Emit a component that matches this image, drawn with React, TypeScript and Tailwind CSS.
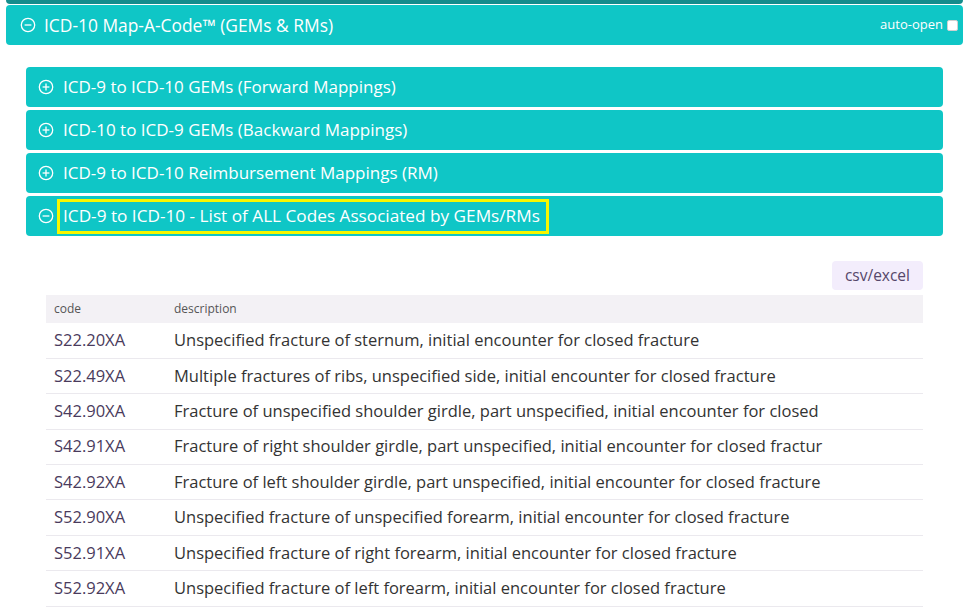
const rows = [
  ["S22.20XA", "Unspecified fracture of sternum, initial encounter for closed fracture"],
  ["S22.49XA", "Multiple fractures of ribs, unspecified side, initial encounter for closed fracture"],
  ["S42.90XA", "Fracture of unspecified shoulder girdle, part unspecified, initial encounter for closed"],
  ["S42.91XA", "Fracture of right shoulder girdle, part unspecified, initial encounter for closed fractur"],
  ["S42.92XA", "Fracture of left shoulder girdle, part unspecified, initial encounter for closed fracture"],
  ["S52.90XA", "Unspecified fracture of unspecified forearm, initial encounter for closed fracture"],
  ["S52.91XA", "Unspecified fracture of right forearm, initial encounter for closed fracture"],
  ["S52.92XA", "Unspecified fracture of left forearm, initial encounter for closed fracture"],
];

const subPanels = [
  { title: "ICD-9 to ICD-10 GEMs (Forward Mappings)", open: false },
  { title: "ICD-10 to ICD-9 GEMs (Backward Mappings)", open: false },
  { title: "ICD-9 to ICD-10 Reimbursement Mappings (RM)", open: false },
  { title: "ICD-9 to ICD-10 - List of ALL Codes Associated by GEMs/RMs", open: true },
];

function CircleIcon({ open }: { open: boolean }) {
  return (
    <svg width="16" height="16" viewBox="0 0 16 16" className="shrink-0">
      <circle cx="8" cy="8" r="6.7" fill="none" stroke="white" strokeWidth="1.3" />
      <line x1="4.6" y1="8" x2="11.4" y2="8" stroke="white" strokeWidth="1.3" />
      {!open && <line x1="8" y1="4.6" x2="8" y2="11.4" stroke="white" strokeWidth="1.3" />}
    </svg>
  );
}

export default function App() {
  return (
    <div
      className="w-[967px] h-[610px] overflow-hidden bg-white pl-[6px] pr-[4px]"
      style={{ fontFamily: '"Open Sans", "Noto Sans", sans-serif' }}
    >
      {/* tail of the previous panel */}
      <div className="h-[4px] rounded-b-[4px] bg-[#158c8c]" />

      {/* main panel header */}
      <div className="mt-[1px] h-[40px] rounded-[4px] bg-[#0fc6c6] flex items-center pl-[14px] pr-[5px] text-white">
        <CircleIcon open />
        <span className="ml-[8px] text-[17.4px]">ICD-10 Map-A-Code™ (GEMs &amp; RMs)</span>
        <label className="ml-auto flex items-center gap-[4px] text-[13px]">
          auto-open
          <span className="inline-block w-[11px] h-[11px] bg-white rounded-[2px] border border-[#d0d0d0]" />
        </label>
      </div>

      {/* body */}
      <div className="px-[20px] pt-[22px]">
        <div className="flex flex-col gap-[3px]">
          {subPanels.map((p) => (
            <div
              key={p.title}
              className="h-[40px] rounded-[4px] bg-[#0fc6c6] flex items-center pl-[12px] text-white"
            >
              <CircleIcon open={p.open} />
              {p.open ? (
                <span className="ml-[3px] border-[3px] border-[#f7f700] h-[35px] flex items-center pl-[3px] pr-[6px] text-[17.2px]">
                  {p.title}
                </span>
              ) : (
                <span className="ml-[9px] text-[17px]">{p.title}</span>
              )}
            </div>
          ))}
        </div>

        <div className="px-[20px] pt-[25px]">
          <div className="flex justify-end">
            <button className="h-[29px] px-[13px] rounded-[4px] bg-[#f3edfc] text-[#56476a] text-[15.5px]">
              csv/excel
            </button>
          </div>
          <table className="mt-[5px] w-full border-collapse text-left">
            <thead>
              <tr className="bg-[#f3f1f5] h-[28px]">
                <th className="font-normal text-[12px] text-[#555] pl-[8px] w-[128px]">code</th>
                <th className="font-normal text-[12px] text-[#555]">description</th>
              </tr>
            </thead>
            <tbody>
              {rows.map(([code, desc]) => (
                <tr key={code} className="h-[35.4px] border-b border-[#ebe9ee]">
                  <td className="pl-[8px] text-[16.5px] text-[#4a3b5c]">{code}</td>
                  <td className="text-[16.5px] text-[#333] whitespace-nowrap">{desc}</td>
                </tr>
              ))}
            </tbody>
          </table>
        </div>
      </div>
    </div>
  );
}
